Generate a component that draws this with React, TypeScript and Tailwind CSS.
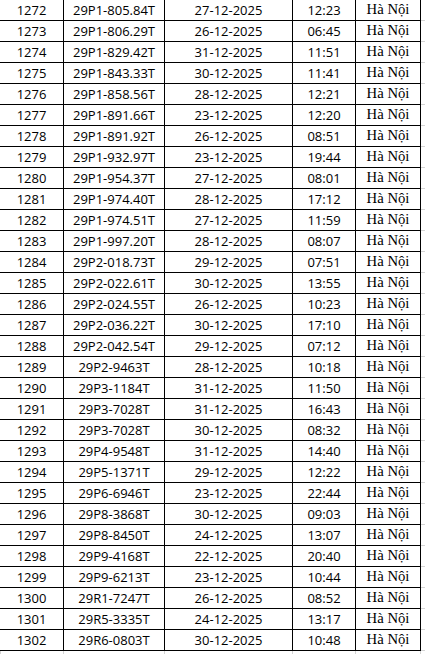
import React from "react";

const rows: [string, string, string, string][] = [
  ["1272", "29P1-805.84T", "27-12-2025", "12:23"],
  ["1273", "29P1-806.29T", "26-12-2025", "06:45"],
  ["1274", "29P1-829.42T", "31-12-2025", "11:51"],
  ["1275", "29P1-843.33T", "30-12-2025", "11:41"],
  ["1276", "29P1-858.56T", "28-12-2025", "12:21"],
  ["1277", "29P1-891.66T", "23-12-2025", "12:20"],
  ["1278", "29P1-891.92T", "26-12-2025", "08:51"],
  ["1279", "29P1-932.97T", "23-12-2025", "19:44"],
  ["1280", "29P1-954.37T", "27-12-2025", "08:01"],
  ["1281", "29P1-974.40T", "28-12-2025", "17:12"],
  ["1282", "29P1-974.51T", "27-12-2025", "11:59"],
  ["1283", "29P1-997.20T", "28-12-2025", "08:07"],
  ["1284", "29P2-018.73T", "29-12-2025", "07:51"],
  ["1285", "29P2-022.61T", "30-12-2025", "13:55"],
  ["1286", "29P2-024.55T", "26-12-2025", "10:23"],
  ["1287", "29P2-036.22T", "30-12-2025", "17:10"],
  ["1288", "29P2-042.54T", "29-12-2025", "07:12"],
  ["1289", "29P2-9463T", "28-12-2025", "10:18"],
  ["1290", "29P3-1184T", "31-12-2025", "11:50"],
  ["1291", "29P3-7028T", "31-12-2025", "16:43"],
  ["1292", "29P3-7028T", "30-12-2025", "08:32"],
  ["1293", "29P4-9548T", "31-12-2025", "14:40"],
  ["1294", "29P5-1371T", "29-12-2025", "12:22"],
  ["1295", "29P6-6946T", "23-12-2025", "22:44"],
  ["1296", "29P8-3868T", "30-12-2025", "09:03"],
  ["1297", "29P8-8450T", "24-12-2025", "13:07"],
  ["1298", "29P9-4168T", "22-12-2025", "20:40"],
  ["1299", "29P9-6213T", "23-12-2025", "10:44"],
  ["1300", "29R1-7247T", "26-12-2025", "08:52"],
  ["1301", "29R5-3335T", "24-12-2025", "13:17"],
  ["1302", "29R6-0803T", "30-12-2025", "10:48"],
];

const sans = "font-['Open_Sans',sans-serif] text-[13px] leading-none";
const serif = "font-['Liberation_Serif',serif] text-[14.7px] leading-none";

export default function App() {
  return (
    <div className="w-[425px] h-[654px] overflow-hidden bg-white text-black">
      {rows.map((r, i) => (
        <div key={i} className="flex h-[21px]">
          <div className={`w-[64px] border-r border-b border-black flex items-end justify-center pb-[3px] ${sans}`}>{r[0]}</div>
          <div className={`w-[101px] border-r border-b border-black flex items-end justify-center pb-[3px] ${sans}`}>{r[1]}</div>
          <div className={`w-[128px] border-r border-b border-black flex items-end justify-center pb-[3px] ${sans}`}>{r[2]}</div>
          <div className={`w-[63px] border-r border-b border-black flex items-end justify-center pb-[3px] ${sans}`}>{r[3]}</div>
          <div className={`w-[65px] border-r border-b border-black flex items-end justify-center pb-[3px] ${serif}`}>Hà Nội</div>
          <div className="flex-1 border-b border-[#d4d4d4]" />
        </div>
      ))}
      <div className="flex h-[10px]">
        <div className="w-[64px] border-r border-l border-[#d4d4d4]" />
        <div className="w-[101px] border-r border-[#d4d4d4]" />
        <div className="w-[128px] border-r border-[#d4d4d4]" />
        <div className="w-[63px] border-r border-[#d4d4d4]" />
        <div className="w-[65px] border-r border-[#d4d4d4]" />
      </div>
    </div>
  );
}
